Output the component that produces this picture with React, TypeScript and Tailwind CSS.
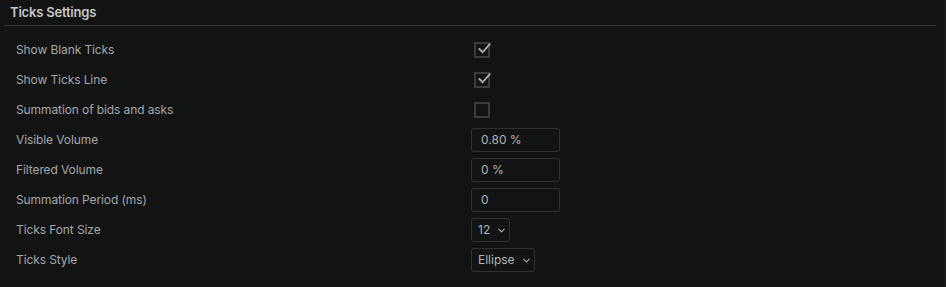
import React from 'react';
import { ChevronDown } from 'lucide-react';

type Row =
  | { label: string; kind: 'check'; checked: boolean }
  | { label: string; kind: 'input'; value: string }
  | { label: string; kind: 'select'; value: string; width: string };

const rows: Row[] = [
  { label: 'Show Blank Ticks', kind: 'check', checked: true },
  { label: 'Show Ticks Line', kind: 'check', checked: true },
  { label: 'Summation of bids and asks', kind: 'check', checked: false },
  { label: 'Visible Volume', kind: 'input', value: '0.80 %' },
  { label: 'Filtered Volume', kind: 'input', value: '0 %' },
  { label: 'Summation Period (ms)', kind: 'input', value: '0' },
  { label: 'Ticks Font Size', kind: 'select', value: '12', width: 'w-[39px]' },
  { label: 'Ticks Style', kind: 'select', value: 'Ellipse', width: 'w-[64px]' },
];

function Checkbox({ checked }: { checked: boolean }) {
  return (
    <div className="ml-[3px] w-[16px] h-[16px] border-2 border-[#3b3c3c] relative">
      {checked && (
        <svg viewBox="0 0 16 16" className="absolute left-[1px] -top-[3px] w-[15px] h-[15px]">
          <path d="M2.5 8.5 L6 12 L13.5 3.5" fill="none" stroke="#a9abad" strokeWidth="2" strokeLinecap="square" />
        </svg>
      )}
    </div>
  );
}

function Control({ row }: { row: Row }) {
  if (row.kind === 'check') return <Checkbox checked={row.checked} />;
  if (row.kind === 'input')
    return (
      <div className="w-[89px] h-[24px] border border-[#303131] rounded-[3px] flex items-center pl-[9px] text-[12px] text-[#b0b4b8]">
        {row.value}
      </div>
    );
  return (
    <div
      className={`${row.width} h-[24px] border border-[#303131] rounded-[3px] flex items-center gap-[6px] pl-[6px] text-[12px] text-[#b0b4b8]`}
    >
      <span>{row.value}</span>
      <ChevronDown size={11} strokeWidth={2.2} className="text-[#b0b4b8]" />
    </div>
  );
}

export default function App() {
  return (
    <div
      className="w-[946px] h-[287px] bg-[#121313] border-r-2 border-[#1a1b1b] overflow-hidden"
      style={{ fontFamily: 'Inter, "Noto Sans", sans-serif' }}
    >
      <div className="h-[25px] flex items-center px-[10px] text-[13px] font-semibold text-[#c6c7c8] tracking-[-0.2px]">
        Ticks Settings
      </div>
      <div className="ml-[4px] mr-[8px] h-px bg-[#353636]" />
      <div className="pt-[9px]">
        {rows.map((row) => (
          <div key={row.label} className="h-[30px] flex items-center">
            <div className="w-[471px] pl-[16px] text-[12px] text-[#a5a7a9] tracking-[-0.1px]">{row.label}</div>
            <Control row={row} />
          </div>
        ))}
      </div>
    </div>
  );
}
